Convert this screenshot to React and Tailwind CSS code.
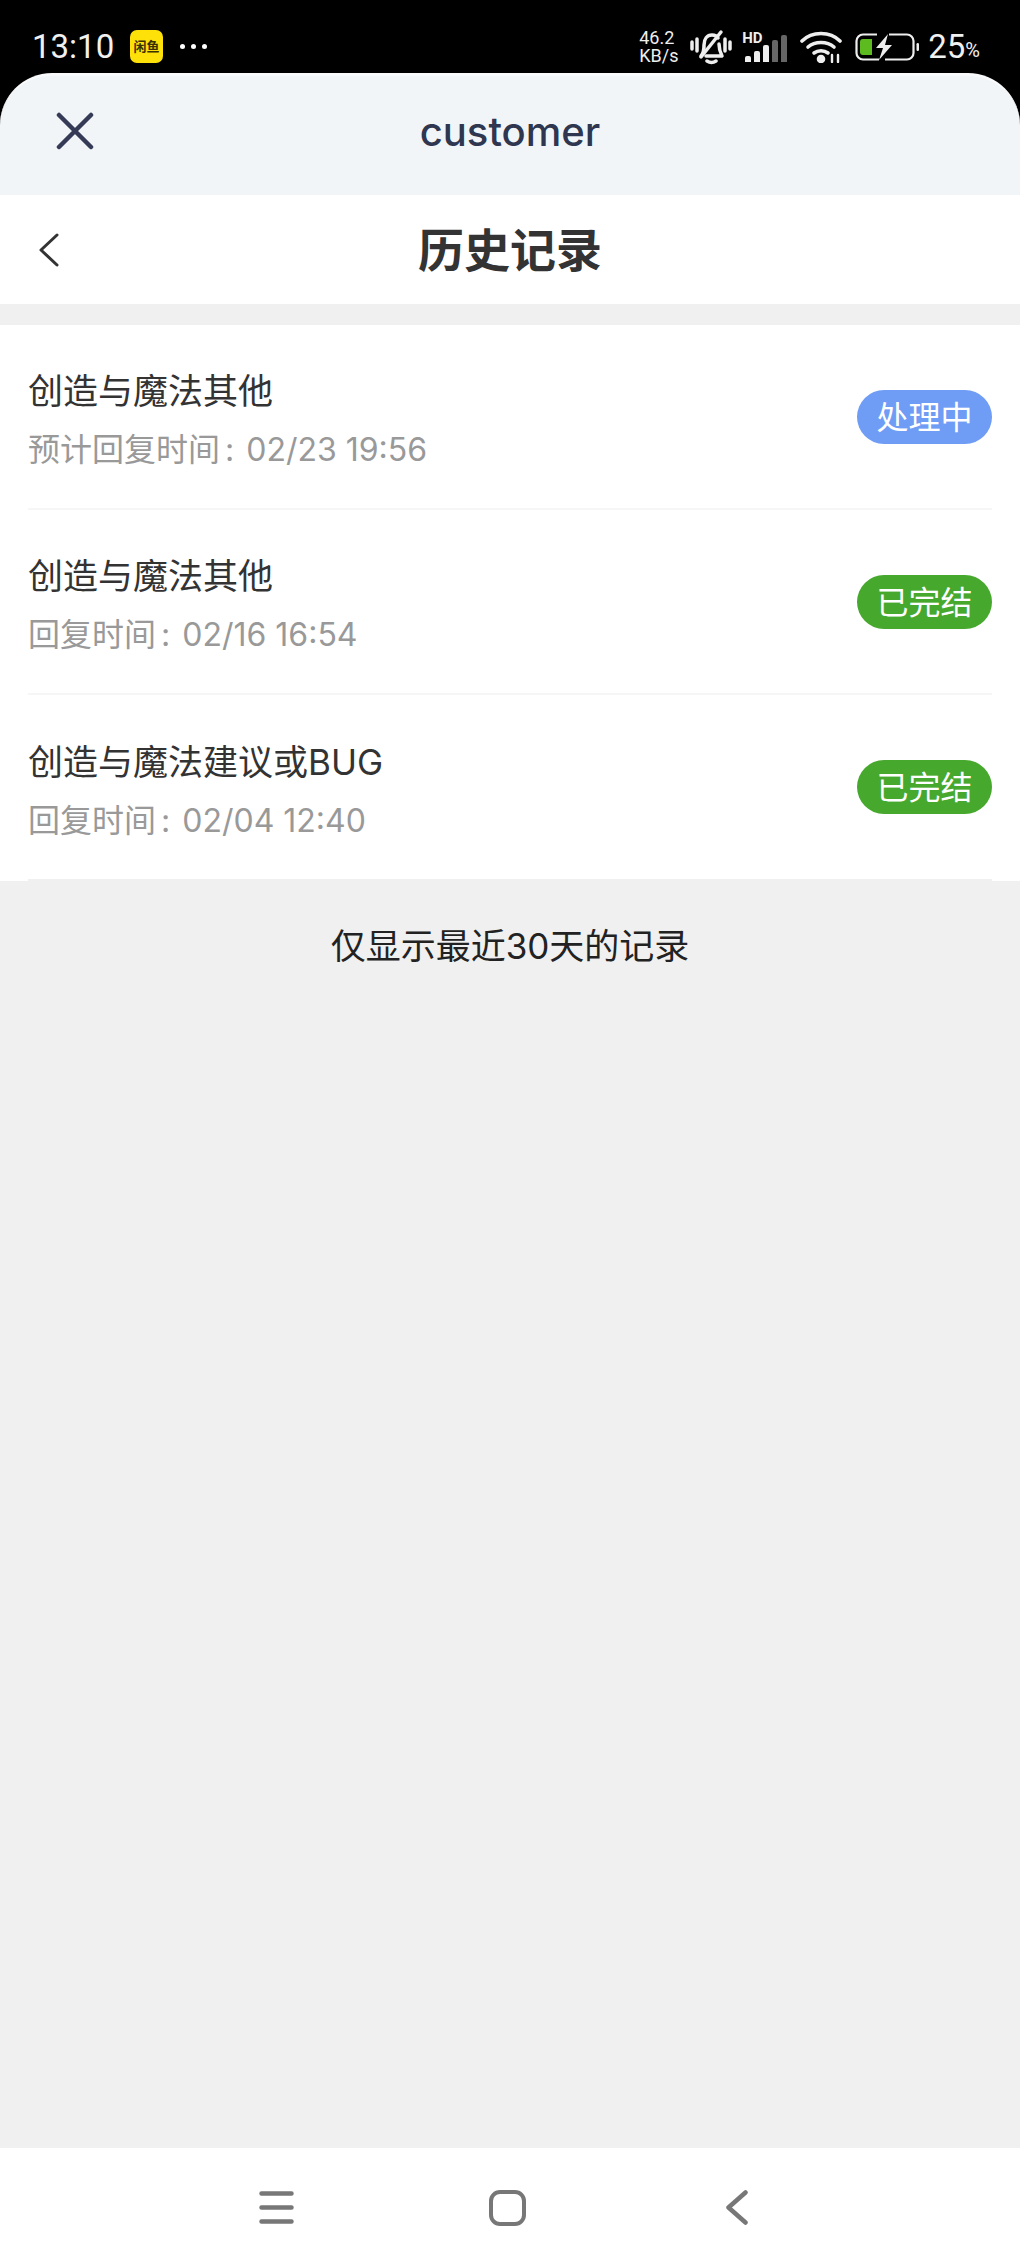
const records = [
  { title: '创造与魔法其他', label: '预计回复时间', time: '02/23 19:56', status: '处理中', color: 'bg-[#6f9cf4]' },
  { title: '创造与魔法其他', label: '回复时间', time: '02/16 16:54', status: '已完结', color: 'bg-[#46a82d]' },
  { title: '创造与魔法建议或BUG', label: '回复时间', time: '02/04 12:40', status: '已完结', color: 'bg-[#46a82d]' },
];

const cjk = "font-['Inter','Noto_Sans_CJK_SC','Noto_Sans',sans-serif]";

function StatusBar() {
  return (
    <div className="flex h-[73px] shrink-0 items-center justify-between pl-[32px] pr-[40px] pt-[20px] text-white font-['Roboto',sans-serif]">
      <div className="flex items-center">
        <span className="w-[80px] text-[33px] leading-none text-[#f0f0f0]">13:10</span>
        <div className={`ml-[18px] flex h-[33px] w-[33px] items-center justify-center rounded-[7px] bg-[#ffe10a] text-[13px] font-bold leading-none text-[#3a3000] ${cjk}`}>闲鱼</div>
        <div className="ml-[17px] flex gap-[6px]">
          <span className="h-[5px] w-[5px] rounded-full bg-white" />
          <span className="h-[5px] w-[5px] rounded-full bg-white" />
          <span className="h-[5px] w-[5px] rounded-full bg-white" />
        </div>
      </div>
      <div className="flex items-center">
        <div className="w-[42px] text-[18px] leading-[18px] text-[#eee]">
          <div>46.2</div>
          <div>KB/s</div>
        </div>
        {/* muted bell */}
        <svg className="ml-[9px]" width="42" height="36" viewBox="0 0 42 36" fill="none" stroke="#eee" strokeWidth="3.500" strokeLinecap="round" strokeLinejoin="round">
          <path d="M2 13v7M7 10v12M35 10v12M40 13v7" />
          <path d="M11 27c3-3 3-6 3-11 0-6 3-10 8-10 3 0 5 1 6 3M29 15c0 5 1 8 3 12H16" />
          <path d="M31 3 11 28" />
          <path d="M17 32c3 2 6 2 9 0" />
        </svg>
        {/* signal */}
        <div className="relative ml-[10px] h-[30px] w-[46px]">
          <span className="absolute left-0 top-[-1px] text-[15px] font-bold leading-none text-[#eee]">HD</span>
          <div className="absolute bottom-0 left-[3px] flex items-end gap-[3px]">
            <span className="h-[6px] w-[6px] rounded-t-[2px] bg-[#eee]" />
            <span className="h-[11px] w-[6px] rounded-t-[2px] bg-[#eee]" />
            <span className="h-[17px] w-[6px] rounded-t-[2px] bg-[#eee]" />
            <span className="h-[22px] w-[6px] rounded-t-[2px] bg-[#666]" />
            <span className="h-[27px] w-[6px] rounded-t-[2px] bg-[#666]" />
          </div>
        </div>
        {/* wifi */}
        <svg className="ml-[12px]" width="42" height="32" viewBox="0 0 42 32" fill="none" stroke="#eee" strokeWidth="3.600" strokeLinecap="round">
          <path d="M2 10C12 0 30 0 40 10" />
          <path d="M8 16c7-6 19-6 26 0" />
          <path d="M14 22c4-3 10-3 14 0" />
          <circle cx="21" cy="28" r="2.500" fill="#eee" />
          <path d="M32 24v7M38 24v7" strokeWidth="2.400" />
        </svg>
        {/* battery */}
        <svg className="ml-[13px]" width="64" height="28" viewBox="0 0 64 28" fill="none">
          <path d="M22 1.500H8a6.500 6.500 0 0 0-6.500 6.500v12A6.500 6.500 0 0 0 8 26.500h16M34 1.500h18a6.500 6.500 0 0 1 6.500 6.500v12a6.500 6.500 0 0 1-6.500 6.500H30" stroke="#eee" strokeWidth="2.200" />
          <path d="M8 6h9v16H8a3 3 0 0 1-3-3V9a3 3 0 0 1 3-3Z" fill="#5dbb1f" />
          <path d="M33 1 21 15h7l-4 12 13-15h-7Z" fill="#eee" />
          <rect x="61.500" y="10" width="2.500" height="8" rx="1.200" fill="#eee" />
        </svg>
        <span className="ml-[9px] text-[33px] leading-none text-[#f0f0f0]">25</span>
        <span className="mt-[6px] text-[20px] leading-none text-[#f0f0f0]">%</span>
      </div>
    </div>
  );
}

function RecordRow({ record }) {
  return (
    <div className="mx-[28px] flex h-[185px] items-center justify-between border-b-2 border-[#f6f6f6] last:h-[186px] last:border-[#f0f0f0]">
      <div className={`pt-[6px] ${cjk}`}>
        <div className="text-[35px] leading-[48px] text-[#333]">{record.title}</div>
        <div className="mt-[13px] text-[32px] leading-[44px] text-[#999]">
          {record.label}
          <span className="ml-[5px] mr-[12px]">:</span>
          {record.time}
        </div>
      </div>
      <div className={`flex h-[54px] w-[135px] items-center justify-center rounded-full pt-[2px] text-[32px] leading-none text-white ${record.color} ${cjk}`}>
        {record.status}
      </div>
    </div>
  );
}

export default function App() {
  return (
    <div className="flex h-[2267px] w-[1020px] flex-col overflow-hidden bg-black">
      <StatusBar />

      <div className="flex h-[122px] shrink-0 items-center rounded-t-[52px] border-t-[3px] border-[#f9fafb] bg-[#f2f5f8] pb-[9px]">
        <div className="grid w-full grid-cols-[1fr_auto_1fr] items-center">
          <svg className="ml-[56px]" width="38" height="38" viewBox="0 0 38 38" fill="none" stroke="#353b57" strokeWidth="4.500" strokeLinecap="round">
            <path d="M3 3 35 35M35 3 3 35" />
          </svg>
          <span className="mt-[2px] text-[40px] font-medium leading-none text-[#2f3650] font-['Inter',sans-serif]">customer</span>
        </div>
      </div>

      <div className="grid h-[109px] shrink-0 grid-cols-[1fr_auto_1fr] items-center bg-white">
        <svg className="ml-[39px]" width="20" height="34" viewBox="0 0 20 34" fill="none" stroke="#333" strokeWidth="3" strokeLinecap="round" strokeLinejoin="round">
          <path d="M18 2 2 17l16 15" />
        </svg>
        <span className={`text-[46px] font-bold leading-none text-[#333] ${cjk}`}>历史记录</span>
      </div>

      <div className="flex flex-1 flex-col bg-[#f0f0f0] pt-[21px]">
        <div className="bg-white">
          {records.map((r, i) => (
            <RecordRow key={i} record={r} />
          ))}
        </div>
        <p className={`mt-[41px] text-center text-[35px] leading-[48px] text-[#222] ${cjk}`}>仅显示最近30天的记录</p>
      </div>

      <div className="flex h-[119px] shrink-0 items-center justify-center bg-white pr-[13px]">
        <div className="flex items-center gap-[195px]">
          <svg width="35" height="33" viewBox="0 0 35 33" fill="none" stroke="#777" strokeWidth="4.500" strokeLinecap="round">
            <path d="M2.500 2.500h30M2.500 16.500h30M2.500 30.500h30" />
          </svg>
          <svg width="37" height="36" viewBox="0 0 37 36" fill="none" stroke="#777" strokeWidth="4">
            <rect x="2" y="2" width="33" height="32" rx="9" />
          </svg>
          <svg className="ml-[5px]" width="22" height="35" viewBox="0 0 22 35" fill="none" stroke="#777" strokeWidth="4.500" strokeLinecap="round" strokeLinejoin="round">
            <path d="M19.500 2.500 2.500 17.500l17 15" />
          </svg>
        </div>
      </div>
    </div>
  );
}
